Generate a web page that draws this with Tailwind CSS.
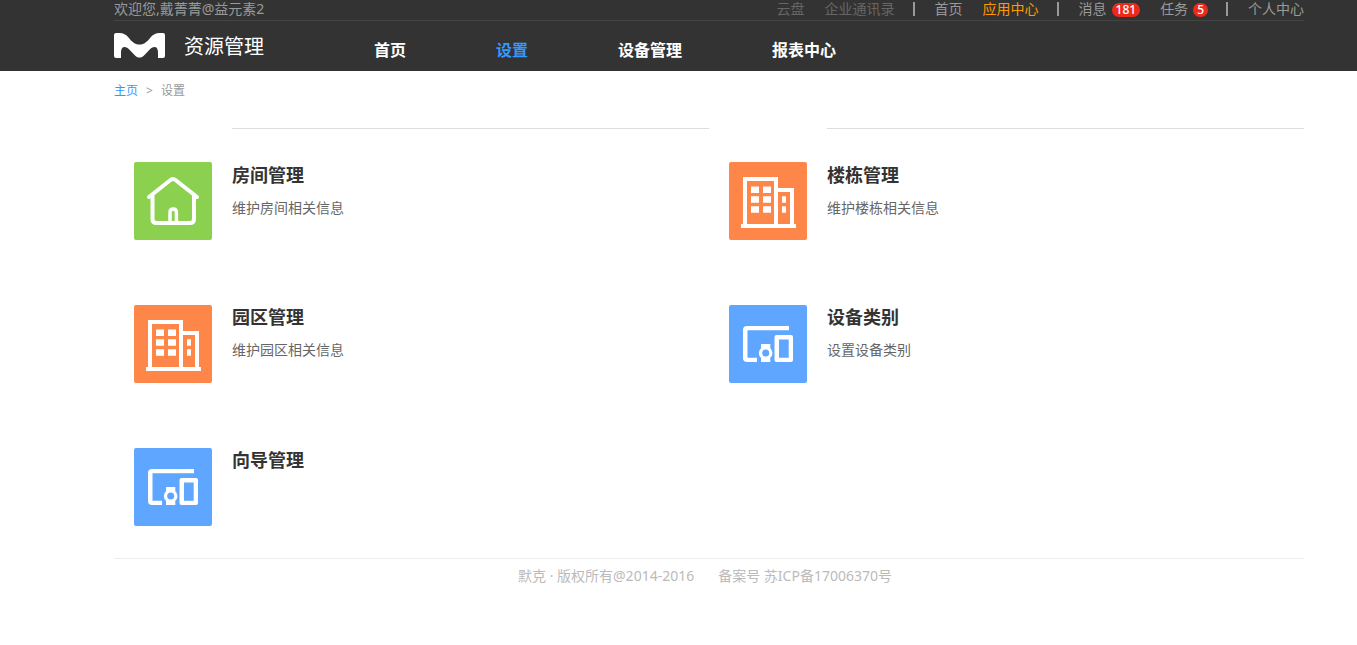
<!DOCTYPE html>
<html lang="zh-CN">
<head>
  <meta charset="UTF-8">
  <meta name="viewport" content="width=device-width, initial-scale=1.0">
  <title>资源管理 - 设置</title>
  <script src="https://cdn.jsdelivr.net/npm/@tailwindcss/browser@4"></script>
</head>
<body class="bg-white font-['Noto_Sans','Noto_Sans_CJK_SC',sans-serif] text-sm text-[#666]">
  <!-- shared icons -->
  <svg class="hidden">
    <symbol id="icon-house" viewBox="0 0 78 78">
      <g fill="none" stroke="#fff" stroke-width="4" stroke-linecap="round" stroke-linejoin="round">
        <path d="M15 35L36.500 18Q39 16 41.500 18L63 35"/>
        <path d="M18.500 34V57Q18.500 61 22.500 61H56Q60 61 60 57V34"/>
        <path d="M36 61V50.500Q36 47 39.200 47Q42.400 47 42.400 50.500V61" stroke-width="3.500"/>
      </g>
    </symbol>
    <symbol id="icon-building" viewBox="0 0 78 78">
      <path fill="#fff" fill-rule="evenodd" d="M14 15H49V26H65V62H67V66H12V62H14ZM18 19V62H45V19ZM49 30V62H61V30Z"/>
      <path fill="#fff" d="M22 24.500h8v6.500h-8zM34 24.500h8v6.500h-8zM22 34.300h8v6.500h-8zM34 34.300h8v6.500h-8zM22 44.300h8v6.500h-8zM34 44.300h8v6.500h-8zM53 34.300h4v6.500h-4zM53 44.300h4v6.500h-4z"/>
    </symbol>
    <symbol id="icon-devices" viewBox="0 0 78 78">
      <path fill="#fff" d="M60 21V25.300H18.500V52.700H28V57H18Q14 57 14 53V25Q14 21 18 21Z"/>
      <path fill="#fff" fill-rule="evenodd" d="M47.500 30H62Q64 30 64 32V55Q64 57 62 57H47.500Q45.500 57 45.500 55V32Q45.500 30 47.500 30ZM50 34.500V52.700H59.700V34.500Z"/>
      <path fill="#fff" fill-rule="evenodd" d="M32 39H41.300V43.200Q43.500 45.200 43.500 48T41.300 52.800V57H32V52.800Q29.800 50.800 29.800 48T32 43.200ZM36.700 44.500a3.500 3.500 0 1 0 0 7a3.500 3.500 0 1 0 0-7Z"/>
    </symbol>
  </svg>

  <header class="bg-[#333] pl-[114px] pr-[53px]">
    <div class="flex h-[21px] items-start justify-between border-b border-[#444] leading-[18px] text-[#999]">
      <span>欢迎您,戴菁菁@益元素2</span>
      <nav class="flex">
        <a href="#" class="text-[#666]">云盘</a>
        <a href="#" class="ml-5 text-[#666]">企业通讯录</a>
        <span class="mt-[2px] ml-[18px] h-[14px] w-[2px] bg-[#999]"></span>
        <a href="#" class="ml-5">首页</a>
        <a href="#" class="ml-5 text-[#ff9900]">应用中心</a>
        <span class="mt-[2px] ml-[18px] h-[14px] w-[2px] bg-[#999]"></span>
        <a href="#" class="ml-5 flex">消息<span class="mt-[3px] ml-[5px] h-[14px] rounded-full bg-[#eb2a1c] px-1 text-xs leading-[14px] font-medium text-white">181</span></a>
        <a href="#" class="ml-5 flex">任务<span class="mt-[3px] ml-[5px] h-[14px] rounded-full bg-[#eb2a1c] px-1 text-xs leading-[14px] font-medium text-white">5</span></a>
        <span class="mt-[2px] ml-[18px] h-[14px] w-[2px] bg-[#999]"></span>
        <a href="#" class="ml-5">个人中心</a>
      </nav>
    </div>
    <div class="flex h-[50px] items-start text-white">
      <a href="#" aria-label="首页" class="mt-3">
        <svg class="h-[25px] w-[51px]" viewBox="0 0 51 25">
          <path fill="#fff" d="M2 0H5.500C9.500 0 12 1.500 14.500 4.500C18 8.800 20.500 11.500 25.500 11.500S33 8.800 36.500 4.500C39 1.500 41.500 0 45.500 0H49Q51 0 51 2V23Q51 25 49 25H44V19.500C44 16 42.800 14 40.500 14C38.500 14 37.300 15 35.500 16.800L30.500 22C28.500 24 27.500 24.500 25.500 24.500S22.500 24 20.500 22L15.500 16.800C13.700 15 12.500 14 10.500 14C8.200 14 7 16 7 19.500V25H2Q0 25 0 23V2Q0 0 2 0Z"/>
        </svg>
      </a>
      <h1 class="mt-3 ml-[19px] text-xl">资源管理</h1>
      <nav class="mt-[17px] ml-[110px] flex gap-[90px] text-base font-bold">
        <a href="#">首页</a>
        <a href="#" class="text-[#3399ff]">设置</a>
        <a href="#">设备管理</a>
        <a href="#">报表中心</a>
      </nav>
    </div>
  </header>

  <div class="pr-[53px] pl-[114px]">
    <nav class="flex h-[57px] pt-[11px] text-xs leading-[18px] text-[#999]">
      <a href="#" class="text-[#3399ff]">主页</a>
      <span class="mx-2">&gt;</span>
      <span>设置</span>
    </nav>

    <main class="grid auto-rows-[143px] grid-cols-2">
      <section class="flex gap-5 pl-5">
        <svg class="mt-[34px] size-[78px] shrink-0 rounded-xs bg-[#8bd14f]"><use href="#icon-house"/></svg>
        <div class="flex-1 border-t border-[#ddd] pt-[34px]">
          <h2 class="text-lg leading-6 font-bold text-[#333]">房间管理</h2>
          <p class="mt-[11px] leading-5">维护房间相关信息</p>
        </div>
      </section>
      <section class="flex gap-5 pl-5">
        <svg class="mt-[34px] size-[78px] shrink-0 rounded-xs bg-[#ff8649]"><use href="#icon-building"/></svg>
        <div class="flex-1 border-t border-[#ddd] pt-[34px]">
          <h2 class="text-lg leading-6 font-bold text-[#333]">楼栋管理</h2>
          <p class="mt-[11px] leading-5">维护楼栋相关信息</p>
        </div>
      </section>
      <section class="flex gap-5 pl-5">
        <svg class="mt-[34px] size-[78px] shrink-0 rounded-xs bg-[#ff8649]"><use href="#icon-building"/></svg>
        <div class="flex-1 pt-[34px]">
          <h2 class="text-lg leading-6 font-bold text-[#333]">园区管理</h2>
          <p class="mt-[11px] leading-5">维护园区相关信息</p>
        </div>
      </section>
      <section class="flex gap-5 pl-5">
        <svg class="mt-[34px] size-[78px] shrink-0 rounded-xs bg-[#5ea6ff]"><use href="#icon-devices"/></svg>
        <div class="flex-1 pt-[34px]">
          <h2 class="text-lg leading-6 font-bold text-[#333]">设备类别</h2>
          <p class="mt-[11px] leading-5">设置设备类别</p>
        </div>
      </section>
      <section class="flex gap-5 pl-5">
        <svg class="mt-[34px] size-[78px] shrink-0 rounded-xs bg-[#5ea6ff]"><use href="#icon-devices"/></svg>
        <div class="flex-1 pt-[34px]">
          <h2 class="text-lg leading-6 font-bold text-[#333]">向导管理</h2>
        </div>
      </section>
    </main>

    <footer class="mt-[1px] flex justify-center gap-6 border-t border-[#eee] pt-[7px] pr-2 leading-5 text-[#bbb]">
      <span>默克 · 版权所有@2014-2016</span>
      <span>备案号 苏ICP备17006370号</span>
    </footer>
  </div>
</body>
</html>
